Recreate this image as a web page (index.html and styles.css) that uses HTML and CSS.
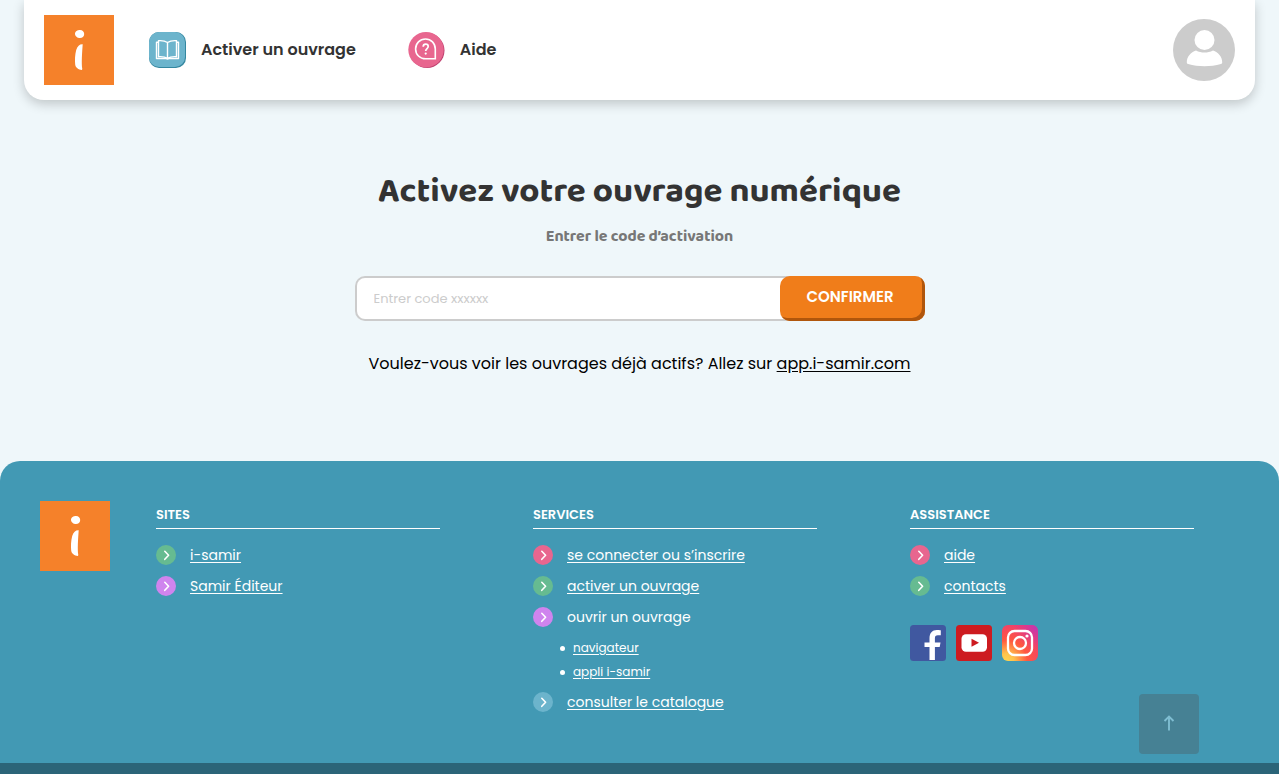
FILE: index.html
```html
<!DOCTYPE html>
<html lang="fr">
<head>
<meta charset="utf-8">
<meta name="viewport" content="width=device-width, initial-scale=1">
<title>Activez votre ouvrage numérique</title>
<link rel="stylesheet" href="styles.css">
</head>
<body>
<svg class="sprite" aria-hidden="true">
  <symbol id="logo" viewBox="0 0 70 70">
    <path fill="#f5812a" d="M0 0h70v70H0z"/>
    <path fill="#fff" d="M31 18.700C31 16.500 33.500 15 36 15c2.600 0 4.200 1.800 4.200 3.900 0 2.300-1.900 4.200-4.200 4.200-2.400 0-5-2-5-4.400zM38.700 29.200c-2.800-.3-5.300 1.700-6.500 5.800-1.300 4.600-1.400 10.600-1 14.500.4 3.300 3.200 5 6.700 5.600l.4-1.200c-1-5.500-.2-16.500.4-24.700z"/>
  </symbol>
  <symbol id="chevron" viewBox="0 0 20 20">
    <circle cx="10" cy="10" r="10" fill="currentColor"/>
    <path d="M8.800 6.300l3.800 4-3.800 4" fill="none" stroke="#fff" stroke-width="1.600" stroke-linecap="round" stroke-linejoin="round"/>
  </symbol>
</svg>

<header class="header">
  <a class="logo" href="#" aria-label="i-samir"><svg viewBox="0 0 70 70"><use href="#logo"/></svg></a>
  <nav class="nav">
    <a class="nav-link" href="#">
      <svg class="nav-icon" viewBox="0 0 37 36" aria-hidden="true">
        <rect width="37" height="36" rx="10" fill="#3487a0"/>
        <rect width="36" height="35" rx="10" fill="#6cb4cc"/>
        <g fill="none" stroke="#fff" stroke-width="1.400" stroke-linejoin="round">
          <path d="M18.500 10.500c-2.500-1.700-5.800-2-9-1.800v16c3.200-.2 6.500 0 9 1.600 2.500-1.600 5.800-1.800 9-1.600v-16c-3.200-.2-6.500.1-9 1.800zM18.500 10.500v15.800"/>
          <path d="M9.500 10.200H7.500v16.300h9.600c.7.700 2.100.7 2.800 0h9.600V10.200h-2"/>
        </g>
      </svg>
      <span>Activer un ouvrage</span>
    </a>
    <a class="nav-link" href="#">
      <svg class="nav-icon" viewBox="0 0 37 36" aria-hidden="true">
        <circle cx="19" cy="18.500" r="17.500" fill="#bf406f"/>
        <circle cx="18" cy="17.700" r="17.700" fill="#e8668f"/>
        <path d="M27.300 26.800H17.600c-5.700 0-10-4.300-10-9.900s4.300-9.900 9.900-9.900 9.800 4.300 9.800 9.900z" fill="none" stroke="#fff" stroke-width="1.600"/>
        <path d="M15.200 14.800c0-1.600 1-2.600 2.500-2.600s2.500.9 2.500 2.300c0 2-2.500 2.100-2.500 4.400" fill="none" stroke="#fff" stroke-width="1.700"/>
        <circle cx="17.700" cy="21.600" r="1.100" fill="#fff"/>
      </svg>
      <span>Aide</span>
    </a>
  </nav>
  <button class="account" type="button" aria-label="Mon compte">
    <svg viewBox="0 0 62 62" aria-hidden="true">
      <circle cx="31" cy="31" r="31" fill="#ccc"/>
      <circle cx="31.500" cy="21" r="10" fill="#fff"/>
      <path d="M23 31.500c5.300 2.700 11.700 2.700 17 0 5.200 1.700 9.200 6.200 9.200 11.800 0 1-.4 1.500-1.300 1.700-10.500 3-22.300 3-32.800 0-.9-.2-1.300-.7-1.300-1.700 0-5.600 4-10.100 9.200-11.800z" fill="#fff"/>
    </svg>
  </button>
</header>

<main class="main">
  <h1 class="title">Activez votre ouvrage numérique</h1>
  <label class="subtitle" for="code">Entrer le code d’activation</label>
  <form class="form">
    <input class="code" id="code" type="text" placeholder="Entrer code xxxxxx">
    <button class="confirm" type="submit">CONFIRMER</button>
  </form>
  <p class="hint">Voulez-vous voir les ouvrages déjà actifs? Allez sur <a href="#">app.i-samir.com</a></p>
</main>

<footer class="footer">
  <a class="logo" href="#" aria-label="i-samir"><svg viewBox="0 0 70 70"><use href="#logo"/></svg></a>
  <div class="columns">
    <section>
      <h2 class="heading">SITES</h2>
      <ul class="links">
        <li><svg class="dot green"><use href="#chevron"/></svg><a href="#">i-samir</a></li>
        <li><svg class="dot purple"><use href="#chevron"/></svg><a href="#">Samir Éditeur</a></li>
      </ul>
    </section>
    <section>
      <h2 class="heading">SERVICES</h2>
      <ul class="links">
        <li><svg class="dot pink"><use href="#chevron"/></svg><a href="#">se connecter ou s’inscrire</a></li>
        <li><svg class="dot green"><use href="#chevron"/></svg><a href="#">activer un ouvrage</a></li>
        <li><svg class="dot purple"><use href="#chevron"/></svg><span>ouvrir un ouvrage</span></li>
      </ul>
      <ul class="sublinks">
        <li><a href="#">navigateur</a></li>
        <li><a href="#">appli i-samir</a></li>
      </ul>
      <ul class="links">
        <li><svg class="dot blue"><use href="#chevron"/></svg><a href="#">consulter le catalogue</a></li>
      </ul>
    </section>
    <section>
      <h2 class="heading">ASSISTANCE</h2>
      <ul class="links">
        <li><svg class="dot pink"><use href="#chevron"/></svg><a href="#">aide</a></li>
        <li><svg class="dot green"><use href="#chevron"/></svg><a href="#">contacts</a></li>
      </ul>
      <div class="social">
        <a href="#" aria-label="Facebook"><svg viewBox="0 0 36 36">
          <rect width="36" height="36" rx="3.500" fill="#4058a0"/>
          <path d="M19.500 35V22H14.500v-4.600h5v-4c0-5.500 2.800-8.400 7.300-8.400 1.400 0 3 .1 4 .3v5h-2.900c-2.300 0-3 1-3 2.900v4.200h5.600l-.8 4.600h-4.800v13z" fill="#fff"/>
        </svg></a>
        <a href="#" aria-label="YouTube"><svg viewBox="0 0 36 36">
          <rect width="36" height="36" rx="3.500" fill="#cd1b20"/>
          <rect x="5.500" y="9.300" width="25.500" height="17.400" rx="4.500" fill="#fff"/>
          <path d="M15.500 13.800l7.500 4-7.500 4z" fill="#cd1b20"/>
        </svg></a>
        <a href="#" aria-label="Instagram"><svg viewBox="0 0 36 36">
          <defs>
            <radialGradient id="warm" cx=".12" cy="1" r="1.050"><stop offset="0" stop-color="#ffd54f"/><stop offset=".2" stop-color="#ffc24c"/><stop offset=".55" stop-color="#ff5840"/><stop offset="1" stop-color="#f0406c"/></radialGradient>
            <radialGradient id="cool" cx="1" cy="0" r=".7"><stop offset="0" stop-color="#b836c0"/><stop offset="1" stop-color="#d83498" stop-opacity="0"/></radialGradient>
          </defs>
          <rect width="36" height="36" rx="6" fill="url(#warm)"/>
          <rect width="36" height="36" rx="6" fill="url(#cool)"/>
          <rect x="6" y="6" width="24" height="24" rx="6.500" fill="none" stroke="#fff" stroke-width="2.300"/>
          <circle cx="18" cy="18" r="6" fill="none" stroke="#fff" stroke-width="2.300"/>
          <circle cx="25" cy="11" r="1.600" fill="#fff"/>
        </svg></a>
      </div>
    </section>
  </div>
</footer>
<div class="bottom-bar"></div>
<button class="to-top" type="button" aria-label="Haut de page">
  <svg viewBox="0 0 12 16" aria-hidden="true"><path d="M6 15.500V1.500M1.500 6L6 1.500 10.500 6" fill="none" stroke="currentColor" stroke-width="1.900"/></svg>
</button>
</body>
</html>
```

FILE: styles.css
```css
* {
  box-sizing: border-box;
}

body {
  margin: 0;
  min-height: 100vh;
  display: flex;
  flex-direction: column;
  background: #eff7fa;
  color: #000;
  font-family: Poppins, Inter, sans-serif;
  font-size: 16px;
}

a {
  color: inherit;
}

button {
  padding: 0;
  border: 0;
  background: none;
  font: inherit;
  cursor: pointer;
}

svg {
  display: block;
}

ul {
  margin: 0;
  padding: 0;
  list-style: none;
}

.sprite {
  position: absolute;
  width: 0;
  height: 0;
}

.header {
  display: flex;
  align-items: center;
  margin: 0 24px;
  padding: 15px 20px;
  border-radius: 0 0 20px 20px;
  background: #fff;
  box-shadow: 0 4px 12px rgba(0, 0, 0, 0.2);
}

.logo {
  flex: none;
  width: 70px;
}

.nav {
  display: flex;
  flex: 1;
  gap: 52px;
  margin-left: 35px;
}

.nav-link {
  display: flex;
  align-items: center;
  gap: 15px;
  color: #333;
  font-weight: 600;
  line-height: 24px;
  text-decoration: none;
}

.nav-icon {
  width: 37px;
  height: 36px;
}

.account {
  width: 62px;
}

.main {
  display: flex;
  flex-direction: column;
  align-items: center;
  padding: 65px 24px 85px;
  text-align: center;
}

.title {
  margin: 0;
  color: #333;
  font-family: "Baloo 2", "Open Sans", sans-serif;
  font-size: 35px;
  font-weight: 700;
  line-height: 52px;
}

.subtitle {
  margin-top: 8px;
  color: #777;
  font-family: "Baloo 2", "Open Sans", sans-serif;
  font-size: 16px;
  font-weight: 700;
  line-height: 24px;
}

.form {
  display: flex;
  width: 100%;
  max-width: 570px;
  margin-top: 27px;
  border: solid #ccc;
  border-width: 2px 0 2px 2px;
  border-radius: 10px;
  background: #fff;
}

.code {
  flex: 1;
  min-width: 0;
  height: 41px;
  padding: 0 17px;
  border: 0;
  background: none;
  font: inherit;
  font-size: 13px;
  outline: none;
}

.code::placeholder {
  color: #ccc;
  opacity: 1;
}

.confirm {
  width: 145px;
  margin: -2px 0;
  padding: 0 4px 4px 0;
  border-radius: 10px;
  background: #f07d1a;
  box-shadow: inset -3px -3px #b0560c;
  color: #fff;
  font-size: 15px;
  font-weight: 600;
}

.hint {
  margin: 31px 0 0;
  line-height: 24px;
}

.hint a {
  text-underline-offset: 2px;
}

.footer {
  display: flex;
  gap: 46px;
  padding: 40px 85px 51px 40px;
  border-radius: 20px 20px 0 0;
  background: #4299b4;
  color: #fff;
}

.columns {
  display: grid;
  flex: 1;
  grid-template-columns: repeat(3, 1fr);
  gap: 93px;
}

.heading {
  margin: 0 0 16px;
  padding: 4px 0;
  border-bottom: 1px solid #fff;
  font-size: 13px;
  font-weight: 600;
  line-height: 19px;
}

.links {
  display: grid;
  gap: 11px;
}

.links li {
  display: flex;
  align-items: center;
  gap: 14px;
  font-size: 14px;
  line-height: 20px;
}

.links a,
.sublinks a {
  text-underline-offset: 2px;
}

.dot {
  flex: none;
  width: 20px;
  height: 20px;
}

.green {
  color: #66bb91;
}

.purple {
  color: #cf84ee;
}

.pink {
  color: #e8668f;
}

.blue {
  color: #6cb4cc;
}

.sublinks {
  display: grid;
  gap: 4px;
  padding: 11px 0 10px 27px;
  font-size: 12px;
  line-height: 20px;
}

.sublinks li {
  display: flex;
  align-items: center;
  gap: 8px;
}

.sublinks li::before {
  content: "";
  width: 5px;
  height: 5px;
  border-radius: 50%;
  background: #fff;
}

.social {
  display: flex;
  gap: 10px;
  margin-top: 29px;
}

.social svg {
  width: 36px;
  height: 36px;
}

.bottom-bar {
  flex: 1;
  min-height: 11px;
  background: #2b6478;
}

.to-top {
  position: fixed;
  right: 80px;
  bottom: 20px;
  display: grid;
  place-items: center;
  width: 60px;
  height: 60px;
  padding-bottom: 2px;
  border-radius: 4px;
  background: #468194;
  color: #7fbdd1;
}

.to-top svg {
  width: 12px;
  height: 16px;
}
```
